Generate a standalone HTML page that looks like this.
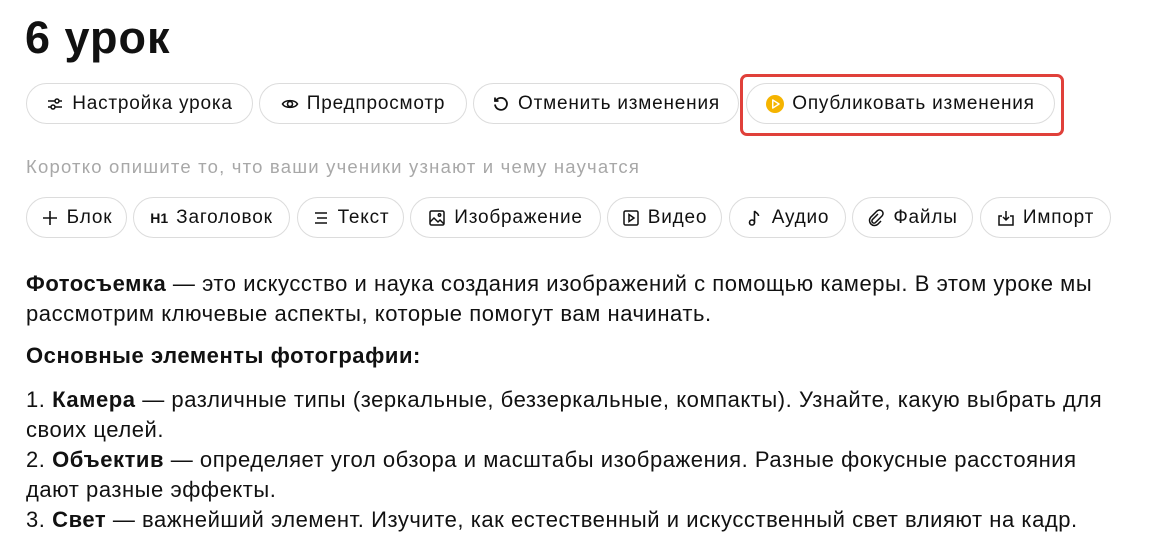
<!DOCTYPE html>
<html><head><meta charset="utf-8"><style>
*{margin:0;padding:0;box-sizing:border-box}
body{width:1176px;height:555px;background:#fff;font-family:"Liberation Sans",sans-serif;color:#111;position:relative;overflow:hidden}
h1{position:absolute;left:25px;top:12px;font-size:45px;font-weight:bold;letter-spacing:1px}
.b{position:absolute;height:41px;border:1px solid #dcdcdc;border-radius:21px;display:flex;align-items:center;justify-content:center;gap:8px;font-size:19px;letter-spacing:0.8px;color:#111;white-space:nowrap}
.b svg{width:18px;height:18px;flex:none}
.red{position:absolute;left:740px;top:74px;width:324px;height:62px;border:3px solid #e0403a;border-radius:7px}
.ph{position:absolute;left:26px;top:156px;font-size:18.5px;letter-spacing:1.2px;color:#a8a8a8;white-space:nowrap}
.t{position:absolute;left:26px;font-size:22px;letter-spacing:0.55px;white-space:nowrap;line-height:30px}
</style></head><body>
<h1>6 урок</h1>
<div class="red"></div>
<div class="b" style="left:26px;top:83px;width:227px"><svg viewBox="0 0 18 18" fill="none" stroke="#111" stroke-width="1.5"><path d="M2 6h7M13 6h3M2 12h3M9 12h7"/><circle cx="11" cy="6" r="2"/><circle cx="7" cy="12" r="2"/></svg>Настройка урока</div>
<div class="b" style="left:259px;top:83px;width:208px"><svg viewBox="0 0 18 18" fill="none" stroke="#111" stroke-width="1.6"><path d="M1.5 9C4 4.5 14 4.5 16.5 9 14 13.5 4 13.5 1.5 9z"/><circle cx="9" cy="9" r="2.5"/></svg>Предпросмотр</div>
<div class="b" style="left:473px;top:83px;width:266px"><svg viewBox="0 0 18 18" fill="none" stroke="#111" stroke-width="1.8"><path d="M4 5.5A6 6 0 1 1 3 9.5M3 2.5v3.5h3.5"/></svg>Отменить изменения</div>
<div class="b" style="left:746px;top:83px;width:309px"><svg viewBox="0 0 20 20"><circle cx="10" cy="10" r="10" fill="#f5b400"/><path d="M7.5 5.5l7 4.5-7 4.5z" fill="none" stroke="#fff" stroke-width="1.6" stroke-linejoin="round"/></svg>Опубликовать изменения</div>
<div class="ph">Коротко опишите то, что ваши ученики узнают и чему научатся</div>
<div class="b" style="left:26px;top:197px;width:101px"><svg viewBox="0 0 18 18" stroke="#111" stroke-width="1.6"><path d="M9 2v14M2 9h14"/></svg>Блок</div>
<div class="b" style="left:133px;top:197px;width:157px"><span style="font-size:14px;font-weight:bold;letter-spacing:0">H1</span>Заголовок</div>
<div class="b" style="left:297px;top:197px;width:107px"><svg viewBox="0 0 18 18" stroke="#111" stroke-width="1.5"><path d="M3 4h12M5 9h10M3 14h12"/></svg>Текст</div>
<div class="b" style="left:410px;top:197px;width:191px"><svg viewBox="0 0 18 18" fill="none" stroke="#111" stroke-width="1.5"><rect x="2" y="2" width="14" height="14" rx="1.5"/><path d="M2 13l4-4 4 4 2-2 4 4"/><circle cx="11.5" cy="6" r="1.2"/></svg>Изображение</div>
<div class="b" style="left:607px;top:197px;width:115px"><svg viewBox="0 0 18 18" fill="none" stroke="#111" stroke-width="1.5"><rect x="2" y="2" width="14" height="14" rx="1.5"/><path d="M7 5.5l5 3.5-5 3.5z"/></svg>Видео</div>
<div class="b" style="left:729px;top:197px;width:117px"><svg viewBox="0 0 18 18" fill="none" stroke="#111" stroke-width="1.6"><circle cx="6" cy="13.5" r="2.5"/><path d="M8.5 13.5V2c1 2 4 2 4 5"/></svg>Аудио</div>
<div class="b" style="left:852px;top:197px;width:121px"><svg viewBox="0 0 18 18" fill="none" stroke="#111" stroke-width="1.5"><path d="M11 5l-5.5 5.5a2 2 0 0 0 3 3L15 7a3.5 3.5 0 0 0-5-5L3.5 8.5a5 5 0 0 0 7 7L14 12"/></svg>Файлы</div>
<div class="b" style="left:980px;top:197px;width:131px"><svg viewBox="0 0 18 18" fill="none" stroke="#111" stroke-width="1.5"><path d="M5 7H2v9h14V7h-3M9 2v9M6 8l3 3 3-3"/></svg>Импорт</div>
<div class="t" style="top:269px"><b>Фотосъемка</b> — это искусство и наука создания изображений с помощью камеры. В этом уроке мы<br>рассмотрим ключевые аспекты, которые помогут вам начинать.</div>
<div class="t" style="top:341px"><b>Основные элементы фотографии:</b></div>
<div class="t" style="top:385px">1. <b>Камера</b> — различные типы (зеркальные, беззеркальные, компакты). Узнайте, какую выбрать для<br>своих целей.<br>2. <b>Объектив</b> — определяет угол обзора и масштабы изображения. Разные фокусные расстояния<br>дают разные эффекты.<br>3. <b>Свет</b> — важнейший элемент. Изучите, как естественный и искусственный свет влияют на кадр.</div>
</body></html>
